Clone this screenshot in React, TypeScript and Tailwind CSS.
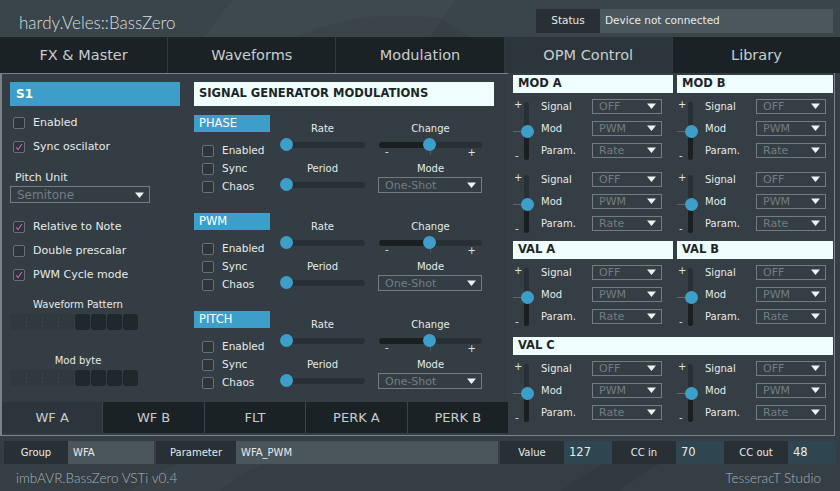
import React from "react";

const tabs = ["FX & Master", "Waveforms", "Modulation", "OPM Control", "Library"];
const subTabs = ["WF A", "WF B", "FLT", "PERK A", "PERK B"];

const Check = ({ on }: { on?: boolean }) => (
  <span className="flex h-[12px] w-[12px] shrink-0 items-center justify-center rounded-[2px] border border-[#687175] bg-[#2d353a]">
    {on && (
      <svg width="8" height="8" viewBox="0 0 8 8">
        <path d="M1.2 4.3 L3.1 6.6 L6.9 1" stroke="#d460b4" strokeWidth="1.1" fill="none" />
      </svg>
    )}
  </span>
);

const CheckRow = ({ label, on, className }: { label: string; on?: boolean; className: string }) => (
  <div className={`flex items-center gap-[8px] ${className}`}>
    <Check on={on} />
    <span>{label}</span>
  </div>
);

const Arrow = () => (
  <svg width="9" height="6" viewBox="0 0 9 6" className="shrink-0">
    <path d="M0 0.5H9L4.5 6Z" fill="#eef3f4" />
  </svg>
);

const Drop = ({ text, className }: { text: string; className: string }) => (
  <div className={`flex items-center justify-between border border-[#737c80] pl-[6px] pr-[5px] text-[#737d82] ${className}`}>
    <span className="leading-none">{text}</span>
    <Arrow />
  </div>
);

const RateSlider = () => (
  <div className="relative flex h-[16px] w-[85px] items-center">
    <div className="h-[6px] w-full rounded-full bg-[#283035]" />
    <div className="absolute left-0 top-[1px] h-[13px] w-[13px] rounded-full bg-[#3d9fc9]" />
  </div>
);

const ChangeSlider = () => (
  <div className="relative flex h-[16px] w-[103px] items-center">
    <div className="flex h-[6px] w-full overflow-hidden rounded-full">
      <div className="w-1/2 bg-[#1a1f22]" />
      <div className="w-1/2 bg-[#283035]" />
    </div>
    <div className="absolute left-[51px] top-[11px] h-[7px] w-px bg-[#4d575b]" />
    <span className="absolute left-[6px] top-[10px] text-[10px] leading-none text-[#dfe4e6]">-</span>
    <span className="absolute right-[6px] top-[11px] text-[10px] leading-none text-[#dfe4e6]">+</span>
    <div className="absolute left-[44px] top-[1px] h-[13px] w-[13px] rounded-full bg-[#3d9fc9]" />
  </div>
);

const SigBlock = ({ name }: { name: string }) => (
  <div className="flex h-[98px] last:h-auto">
    <div className="w-[86px]">
      <div className="flex h-[17px] w-[76px] items-center bg-[#3d9fc9] pl-[5px] text-[11.5px] text-white">{name}</div>
      <div className="mt-[10px] flex flex-col pl-[8px] text-[10.5px]">
        <CheckRow label="Enabled" className="h-[18px]" />
        <CheckRow label="Sync" className="h-[18px]" />
        <CheckRow label="Chaos" className="h-[18px]" />
      </div>
    </div>
    <div className="flex flex-col text-[10px]">
      <div className="mt-[6px] flex h-[14px] items-center">
        <div className="w-[85px] text-center">Rate</div>
        <div className="ml-[14px] w-[103px] text-center">Change</div>
      </div>
      <div className="mt-[2px] flex h-[16px]">
        <RateSlider />
        <div className="ml-[14px]">
          <ChangeSlider />
        </div>
      </div>
      <div className="mt-[8px] flex h-[14px] items-center">
        <div className="w-[85px] text-center">Period</div>
        <div className="ml-[14px] w-[103px] text-center">Mode</div>
      </div>
      <div className="mt-[2px] flex h-[16px] items-center">
        <RateSlider />
        <Drop text="One-Shot" className="ml-[13px] h-[16px] w-[104px] text-[11px]" />
      </div>
    </div>
  </div>
);

const Pattern = ({ className }: { className: string }) => (
  <div className={`flex h-[16px] w-[128px] ${className}`}>
    <svg width="64" height="16" viewBox="0 0 64 16" className="rounded-l-[2px] bg-[#30393e]">
      {[16, 32, 48].map((x) =>
        [4, 8, 12].map((y) => <rect key={`${x}-${y}`} x={x} y={y} width="1" height="1" fill="#4a5459" />)
      )}
    </svg>
    <div className="flex flex-1 gap-px pl-px">
      {[0, 1, 2, 3].map((i) => (
        <div key={i} className="flex-1 rounded-[3px] bg-[#20282c]" />
      ))}
    </div>
  </div>
);

const VSlider = () => (
  <div className="relative h-[73px] w-[28px] shrink-0">
    <span className="absolute left-[1px] top-[5px] text-[10px] leading-none text-[#dfe4e6]">+</span>
    <span className="absolute left-[2px] top-[56px] text-[10px] leading-none text-[#dfe4e6]">-</span>
    <div className="absolute left-0 top-[36px] h-px w-[9px] bg-[#5c666b]" />
    <div className="absolute left-[11px] top-[7px] flex h-[58px] w-[5px] flex-col overflow-hidden rounded-full">
      <div className="h-[29px] bg-[#283035]" />
      <div className="flex-1 bg-[#1a1f22]" />
    </div>
    <div className="absolute left-[8px] top-[30px] h-[13px] w-[13px] rounded-full bg-[#3d9fc9]" />
  </div>
);

const ModGroup = () => (
  <div className="flex h-[73px]">
    <VSlider />
    <div className="flex flex-col">
      {[
        ["Signal", "OFF"],
        ["Mod", "PWM"],
        ["Param.", "Rate"],
      ].map(([l, v]) => (
        <div key={l} className="flex h-[22px] items-center">
          <span className="w-[51px]">{l}</span>
          <Drop text={v} className="h-[15px] w-[70px] text-[11px]" />
        </div>
      ))}
    </div>
  </div>
);

const ModHead = ({ title, className }: { title: string; className?: string }) => (
  <div className={`flex h-[18px] items-center bg-[#effdfd] pl-[5px] text-[11.5px] font-bold text-[#1d2528] ${className ?? ""}`}>
    {title}
  </div>
);

export default function App() {
  return (
    <div className="relative h-[491px] w-[840px] overflow-hidden bg-[#343e44] font-['DejaVu_Sans',sans-serif] text-[#e6eaeb]">
      {/* header */}
      <header className="relative flex h-[37px] bg-[#3a454b]">
        <svg className="absolute inset-0" width="840" height="37">
          <path d="M205 37 L232 0 L455 0 L430 37Z" fill="#ffffff" opacity="0.025" />
          <path d="M295 37 Q360 8 440 18 L468 37Z" fill="#000000" opacity="0.06" />
        </svg>
        <div className="relative ml-[19px] mt-[10px] font-['Lato',sans-serif] text-[17px] font-light text-[#d9dedf]">
          hardy.Veles::BassZero
        </div>
        <div className="relative ml-auto mr-[7px] mt-[9px] flex h-[24px] text-[10.5px]">
          <div className="flex w-[64px] items-center justify-center bg-[#283035]">Status</div>
          <div className="flex w-[233px] items-center bg-[#4b575d] pl-[5px]">Device not connected</div>
        </div>
      </header>

      {/* main tabs */}
      <div className="flex h-[36px] gap-px bg-[#2e383d]">
        {tabs.map((t) => (
          <div
            key={t}
            className={`flex flex-1 items-center justify-center pt-[2px] text-[14.5px] text-[#c8cdce] ${
              t === "OPM Control" ? "bg-[#2c353b]" : "bg-[#1b2226]"
            }`}
          >
            {t}
          </div>
        ))}
      </div>

      {/* content */}
      <div className="flex h-[363px]">
        <div className="flex w-[508px] flex-col border-b border-l-2 border-t border-[#7a8387] bg-[#333d43]">
          <div className="flex h-[328px] overflow-hidden">
            {/* S1 column */}
            <div className="flex w-[188px] flex-col">
              <div className="ml-[8px] mt-[8px] flex h-[24px] w-[170px] items-center bg-[#3d9fc9] pl-[6px] text-[12px] font-bold text-white">
                S1
              </div>
              <CheckRow label="Enabled" className="ml-[11px] mt-[5px] h-[24px] text-[11px]" />
              <CheckRow on label="Sync oscilator" className="ml-[11px] h-[24px] text-[11px]" />
              <div className="ml-[13px] mt-[12px] h-[14px] text-[11px] leading-[14px]">Pitch Unit</div>
              <Drop text="Semitone" className="ml-[8px] mt-px h-[17px] w-[140px] text-[12px]" />
              <CheckRow on label="Relative to Note" className="ml-[11px] mt-[12px] h-[24px] text-[11px]" />
              <CheckRow label="Double prescalar" className="ml-[11px] h-[24px] text-[11px]" />
              <CheckRow on label="PWM Cycle mode" className="ml-[11px] h-[24px] text-[11px]" />
              <div className="ml-[8px] mt-[11px] h-[14px] w-[136px] text-center text-[10px] leading-[14px]">Waveform Pattern</div>
              <Pattern className="ml-[8px] mt-[2px]" />
              <div className="ml-[8px] mt-[24px] h-[14px] w-[136px] text-center text-[10px] leading-[14px]">Mod byte</div>
              <Pattern className="ml-[8px] mt-[2px]" />
            </div>

            {/* signal generator modulations */}
            <div className="flex flex-1 flex-col pl-[4px]">
              <div className="mt-[8px] flex h-[24px] w-[300px] items-center bg-[#effdfd] pl-[5px] text-[11.5px] font-bold text-[#1d2528]">
                SIGNAL GENERATOR MODULATIONS
              </div>
              <div className="mt-[9px]">
                {["PHASE", "PWM", "PITCH"].map((n) => (
                  <SigBlock key={n} name={n} />
                ))}
              </div>
            </div>
          </div>

          <div className="mb-[2px] flex h-[31px] gap-px bg-[#3a444a]">
            {subTabs.map((t) => (
              <div
                key={t}
                className={`flex flex-1 items-center justify-center text-[13px] text-[#c8cdce] ${
                  t === "WF A" ? "bg-[#2c353b]" : "bg-[#1b2226]"
                }`}
              >
                {t}
              </div>
            ))}
          </div>
        </div>

        {/* OPM modules */}
        <div className="w-[327px] border-b border-r border-[#7a8387] pl-[5px] pt-[2px] text-[10px]">
          <div className="flex gap-[4px]">
            <div className="w-[160px]">
              <ModHead title="MOD A" />
              <div className="mt-[2px]">
                <ModGroup />
                <ModGroup />
              </div>
            </div>
            <div className="w-[156px]">
              <ModHead title="MOD B" />
              <div className="mt-[2px]">
                <ModGroup />
                <ModGroup />
              </div>
            </div>
          </div>
          <div className="flex gap-[4px]">
            <div className="w-[160px]">
              <ModHead title="VAL A" />
              <div className="mt-[2px]">
                <ModGroup />
              </div>
            </div>
            <div className="w-[156px]">
              <ModHead title="VAL B" />
              <div className="mt-[2px]">
                <ModGroup />
              </div>
            </div>
          </div>
          <div className="mt-[3px]">
            <ModHead title="VAL C" className="w-[320px]" />
            <div className="mt-[2px] flex gap-[4px]">
              <div className="w-[160px]">
                <ModGroup />
              </div>
              <ModGroup />
            </div>
          </div>
        </div>
      </div>

      {/* bottom */}
      <svg className="absolute left-0 top-[436px]" width="840" height="55">
        <path d="M130 55 Q200 0 330 10 Q260 20 220 55Z" fill="#ffffff" opacity="0.025" />
        <path d="M560 55 Q640 -5 720 8 Q660 20 620 55Z" fill="#000000" opacity="0.05" />
      </svg>
      <div className="relative ml-[4px] mt-[5px] flex h-[23px] text-[10px]">
        <div className="flex w-[64px] items-center justify-center bg-[#283035]">Group</div>
        <div className="flex w-[86px] items-center bg-[#4b565c] pl-[5px]">WFA</div>
        <div className="ml-[2px] flex w-[80px] items-center justify-center bg-[#283035]">Parameter</div>
        <div className="flex w-[262px] items-center bg-[#4b565c] pl-[5px]">WFA_PWM</div>
        <div className="ml-[2px] flex w-[64px] items-center justify-center bg-[#283035]">Value</div>
        <div className="flex w-[48px] items-center bg-[#2f4550] pl-[5px] text-[11.5px]">127</div>
        <div className="flex w-[64px] items-center justify-center bg-[#283035]">CC in</div>
        <div className="flex w-[48px] items-center bg-[#2f4550] pl-[5px] text-[11.5px]">70</div>
        <div className="flex w-[64px] items-center justify-center bg-[#283035]">CC out</div>
        <div className="flex w-[48px] items-center bg-[#2f4550] pl-[5px] text-[11.5px]">48</div>
      </div>
      <div className="relative mt-[7px] flex h-[14px] items-center justify-between pl-[16px] pr-[19px] font-['Lato',sans-serif] text-[13.5px] font-light text-[#a9b1b5]">
        <span>imbAVR.BassZero VSTi v0.4</span>
        <span>TesseracT Studio</span>
      </div>
    </div>
  );
}
